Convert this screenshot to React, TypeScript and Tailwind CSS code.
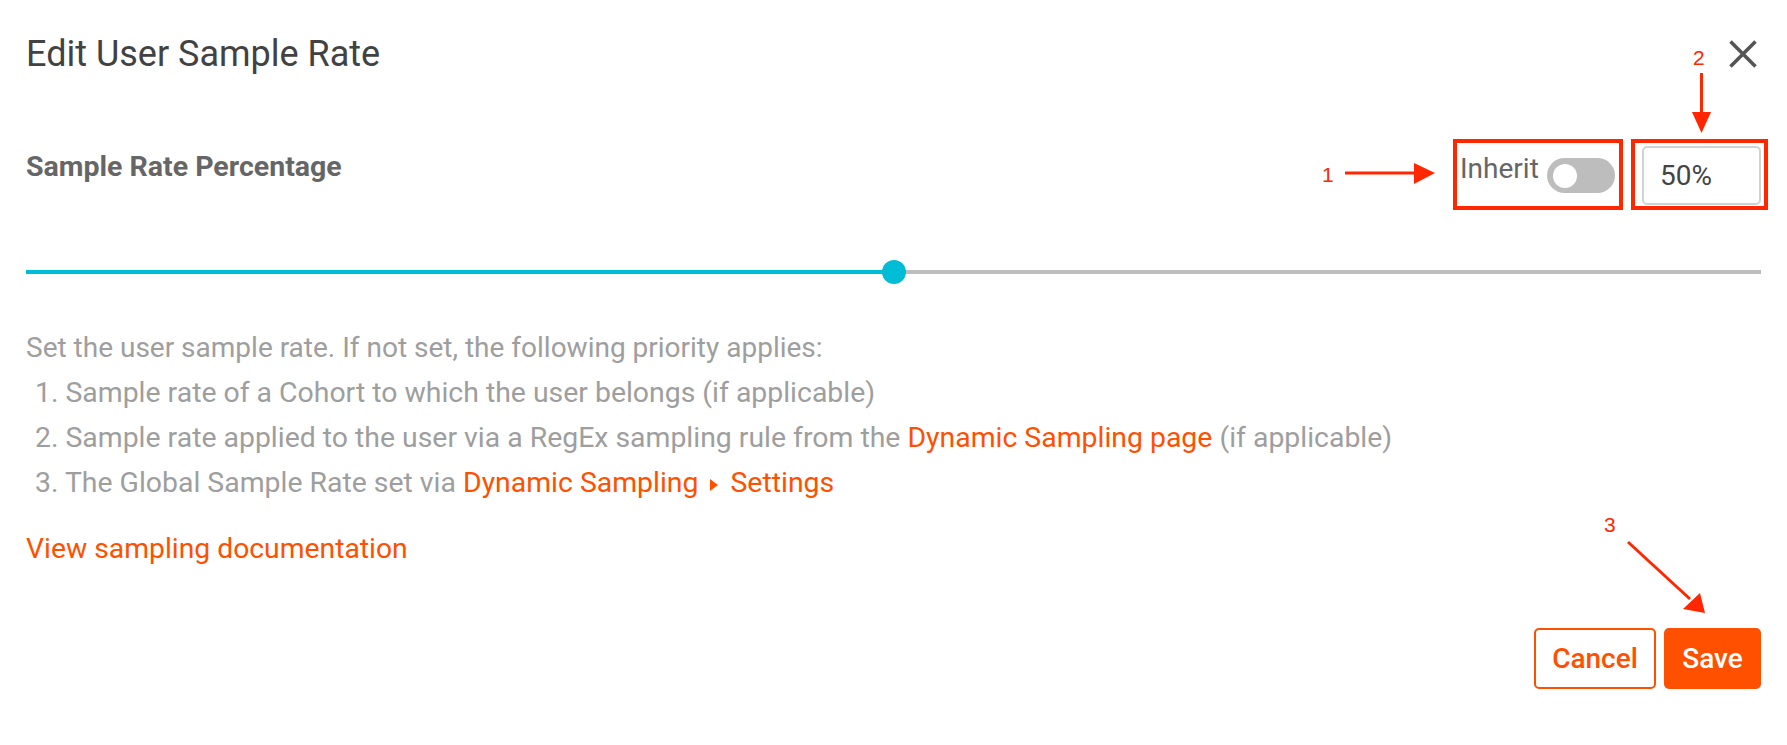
import { FC } from 'react'

const Toggle: FC = () => (
  <span className="relative ml-auto mr-[4px] mt-[15px] block h-[35px] w-[68px] rounded-full bg-[#bdbdbd]">
    <span className="absolute left-[6px] top-[6px] h-[24px] w-[24px] rounded-full bg-white" />
  </span>
)

const Annotations: FC = () => (
  <div className="pointer-events-none absolute inset-0 font-['Liberation_Sans',Arial,sans-serif] text-[21px] leading-[21px] text-[#ff2600]">
    <span className="absolute left-[1693px] top-[47px]">2</span>
    <span className="absolute left-[1322px] top-[164px]">1</span>
    <span className="absolute left-[1604px] top-[514px]">3</span>
    <svg className="absolute left-0 top-0" width="1787" height="745" viewBox="0 0 1787 745">
      <g fill="#ff2600" stroke="#ff2600">
        <line x1="1345" y1="173" x2="1418" y2="173" strokeWidth="3" />
        <polygon points="1414,163 1435,173 1414,184" stroke="none" />
        <line x1="1701.5" y1="73" x2="1701.5" y2="115" strokeWidth="3" />
        <polygon points="1692,112 1711,112 1701.5,133" stroke="none" />
        <line x1="1628" y1="542" x2="1690" y2="599" strokeWidth="3" />
        <polygon points="1683,609 1700,593 1705,613" stroke="none" />
      </g>
    </svg>
  </div>
)

const App: FC = () => {
  return (
    <div className="relative h-[745px] w-full overflow-hidden bg-white px-[26px] pt-[32px] font-['Roboto',sans-serif]">
      <div className="flex h-[44px] items-center justify-between">
        <h1 className="text-[36px] font-normal leading-[44px] text-[#424242]">Edit User Sample Rate</h1>
        <button className="mr-[4px] text-[#555]" title="Close">
          <svg width="28" height="28" viewBox="0 0 28 28" fill="none" stroke="currentColor" strokeWidth="3.6">
            <path d="M1.5 1.5 L26.5 26.5 M26.5 1.5 L1.5 26.5" />
          </svg>
        </button>
      </div>

      <div className="mt-[63px] flex h-[71px] items-start justify-between">
        <h2 className="mt-[11px] text-[28.5px] font-bold leading-[34px] text-[#666]">Sample Rate Percentage</h2>
        <div className="-mr-[7px] flex items-start gap-[8px]">
          <div className="flex h-[71px] w-[170px] items-start border-4 border-[#ff2600] pl-[3px]">
            <span className="mt-[9px] text-[28px] leading-[33px] text-[#666]">Inherit</span>
            <Toggle />
          </div>
          <div className="h-[71px] w-[137px] border-4 border-[#ff2600] pl-[7px] pt-[3px]">
            <div className="flex h-[59px] w-[119px] items-center rounded-[5px] border-2 border-[#cfd3d3] pl-[16px] text-[28px] text-[#444]">
              50%
            </div>
          </div>
        </div>
      </div>

      {/* slider */}
      <div className="relative mt-[50px] flex h-[24px] items-center">
        <div className="flex h-[4px] w-full">
          <div className="flex-1 bg-[#00bcd4]" />
          <div className="flex-1 bg-[#bdbdbd]" />
        </div>
        <span className="absolute left-1/2 top-0 h-[24px] w-[24px] -translate-x-1/2 rounded-full bg-[#00bcd4]" />
      </div>

      <div className="mt-[41px] text-[28px] leading-[45px] text-[#9e9e9e]">
        <p>Set the user sample rate. If not set, the following priority applies:</p>
        <p className="pl-[9px] text-[28.4px]">1. Sample rate of a Cohort to which the user belongs (if applicable)</p>
        <p className="pl-[9px] text-[28.4px]">
          2. Sample rate applied to the user via a RegEx sampling rule from the{' '}
          <a className="text-[#ff5000]">Dynamic Sampling page</a> (if applicable)
        </p>
        <p className="pl-[9px] text-[28.4px]">
          3. The Global Sample Rate set via{' '}
          <a className="text-[#ff5000]">
            Dynamic Sampling
            <svg className="mx-[12px] inline-block align-[1px]" width="8" height="12" viewBox="0 0 8 12">
              <polygon points="0,0 8,6 0,12" fill="currentColor" />
            </svg>
            Settings
          </a>
        </p>
      </div>

      <a className="mt-[21px] block text-[28.3px] leading-[45px] text-[#ff5000]">View sampling documentation</a>

      <div className="mt-[57px] flex justify-end gap-[8px]">
        <button className="h-[61px] w-[122px] rounded-[5px] border-2 border-[#ff5000] text-[28px] font-medium text-[#ff5000]">
          Cancel
        </button>
        <button className="h-[61px] w-[97px] rounded-[5px] bg-[#ff5000] text-[28px] font-medium text-white">
          Save
        </button>
      </div>

      <Annotations />
    </div>
  )
}

export default App
